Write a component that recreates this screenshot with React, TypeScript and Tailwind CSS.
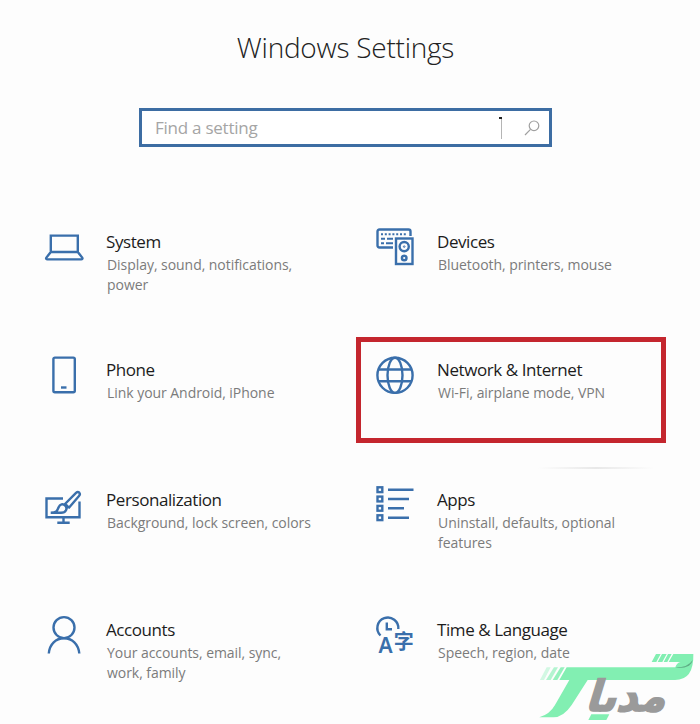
import type { ReactNode } from 'react';

type Setting = {
  title: string;
  description: string;
  icon: ReactNode;
  highlighted?: boolean;
};

const Icon = ({ children }: { children: ReactNode }) => (
  <svg
    viewBox="0 0 40 40"
    className="w-10 h-10 shrink-0 overflow-visible"
    fill="none"
    stroke="#3a6fab"
    strokeWidth="2.4"
  >
    {children}
  </svg>
);

const settings: Setting[] = [
  {
    title: 'System',
    description: 'Display, sound, notifications, power',
    icon: (
      <Icon>
        <path d="M6.8 25V8.6h27V25M6.8 25L2.4 30.6c-.7 1 0 1.8 1 1.8h33.8c1 0 1.7-.8 1-1.8L33.8 25z" />
      </Icon>
    ),
  },
  {
    title: 'Devices',
    description: 'Bluetooth, printers, mouse',
    icon: (
      <Icon>
        <path d="M18 20.500H4.500Q2.500 20.500 2.500 18.500V4.500Q2.500 2.500 4.500 2.500H33.500Q35.500 2.500 35.500 4.500V9" />
        <path d="M6 7.200h26" strokeWidth="2" strokeDasharray="2 1.800" />
        <path d="M6 11.700h4M12 11.700h6M6 16.200h3M11 16.200h7" strokeWidth="2" />
        <rect x="21" y="11.500" width="16.500" height="25.500" />
        <circle cx="29.200" cy="19.600" r="4.600" />
        <circle cx="29.200" cy="19.600" r="0.800" strokeWidth="1" />
        <circle cx="29.200" cy="31" r="2.300" />
      </Icon>
    ),
  },
  {
    title: 'Phone',
    description: 'Link your Android, iPhone',
    icon: (
      <Icon>
        <rect x="9.400" y="2.600" width="21.400" height="34.600" rx="1.500" />
        <path d="M17 32.500h5.500" />
      </Icon>
    ),
  },
  {
    title: 'Network & Internet',
    description: 'Wi-Fi, airplane mode, VPN',
    highlighted: true,
    icon: (
      <Icon>
        <circle cx="20" cy="20.300" r="17.600" />
        <ellipse cx="20" cy="20.300" rx="7.500" ry="17.600" />
        <path d="M3.200 14.500h33.600M3.200 26.200h33.600" />
      </Icon>
    ),
  },
  {
    title: 'Personalization',
    description: 'Background, lock screen, colors',
    icon: (
      <Icon>
        <path d="M19 13.500H2.500V32.300H35.500V16.500" />
        <path d="M19.500 32.500V37.500M13.300 37.700h12.400" />
        <path d="M20.500 19.500L32 7.900Q33.800 6.300 35.300 7.700Q36.600 9.200 35 11L24.500 23.300M20.500 19.500Q23.500 20 24.500 23.300" />
        <path d="M6.700 27.800C12.500 27.800 13.200 26 14.500 22.500C16 19 19 18.500 21 20.500C24 23.500 22 27.800 17 27.800Z" />
      </Icon>
    ),
  },
  {
    title: 'Apps',
    description: 'Uninstall, defaults, optional features',
    icon: (
      <Icon>
        <rect x="2.500" y="2.300" width="4.800" height="4.800" />
        <rect x="2.500" y="11.600" width="4.800" height="4.800" />
        <rect x="2.500" y="20.900" width="4.800" height="4.800" />
        <rect x="2.500" y="30.300" width="4.800" height="4.800" />
        <path d="M13 4.700h25.500M13 14h21M13 23.300h16M13 32.700h21" />
      </Icon>
    ),
  },
  {
    title: 'Accounts',
    description: 'Your accounts, email, sync, work, family',
    icon: (
      <Icon>
        <circle cx="20" cy="12.600" r="10.500" />
        <path d="M4.800 38.500C5.500 29 12 23.200 20 23.200S34.500 29 35.300 38.500" />
      </Icon>
    ),
  },
  {
    title: 'Time & Language',
    description: 'Speech, region, date',
    icon: (
      <Icon>
        <path d="M5.500 20.500A10.500 10.500 0 1 1 23.300 14" />
        <path d="M11.800 7.500V14.300H17" />
        <text
          x="3.500"
          y="38"
          fill="#3a6fab"
          stroke="none"
          className="font-['Noto_Sans',sans-serif] text-[21px] font-semibold"
        >
          A
        </text>
        <text
          x="18.800"
          y="34"
          fill="#3a6fab"
          stroke="none"
          className="font-['Noto_Sans_CJK_SC',sans-serif] text-[20px] font-bold"
        >
          字
        </text>
      </Icon>
    ),
  },
];

function SettingItem({ title, description, icon, highlighted }: Setting) {
  return (
    <div className="relative flex items-start">
      {highlighted && (
        <div className="absolute -left-[19px] -top-[18px] w-[310px] h-[106px] border-[5px] border-[#c4262e]" />
      )}
      {icon}
      <div className="ml-[22px] pt-[3px] w-[210px]">
        <h2 className="text-[17px] leading-6 tracking-[-0.42px] text-[#1c1c1c] whitespace-nowrap">{title}</h2>
        <p className="mt-px ml-px text-[14px] leading-5 tracking-[-0.05px] text-[#7b7b7b]">{description}</p>
      </div>
    </div>
  );
}

function Watermark() {
  return (
    <svg viewBox="0 0 510 252" className="absolute left-[530px] top-[640px] w-[170px] h-[84px]">
      <g fill="#82efb2">
        <path d="M110 82H436Q440 68 452 66H416L430 42H490Q492 120 435 120H173L125 195Q100 232 70 232H28Q60 222 75 195L118 120H88Z" />
        <path d="M92 82h12L82 120H68z" opacity=".85" />
        <path d="M72 82h12L62 120H48z" opacity=".6" />
        <path d="M50 82h12L42 120H30z" opacity=".35" />
        <path d="M378 42h14l-13 24h-14zM396 42h14l-13 24h-14zM414 42h11l-13 24h-11z" />
      </g>
      <path d="M436 83Q475 82 488 60Q486 72 477 77Q460 86 436 83Z" fill="#5fae86" />
      <text
        x="168"
        y="180"
        textLength="240"
        lengthAdjust="spacingAndGlyphs"
        transform="translate(62 0) skewX(-17) scale(1 1.19)"
        fill="#9a9a9a"
        stroke="#9a9a9a"
        strokeWidth="4"
        className="font-['DejaVu_Sans',sans-serif] text-[108px] font-bold"
      >
        مدىا
      </text>
      <path d="M184 223h54l-9 17h-54z" fill="#82efb2" />
    </svg>
  );
}

export default function App() {
  return (
    <div className="relative w-[700px] h-[724px] overflow-hidden bg-[#fdfdfd] font-['Open_Sans','Noto_Sans',sans-serif]">
      <h1 className="pt-[27px] pr-[9px] text-center text-[28px] leading-10 tracking-[-0.25px] font-light text-[#222]">
        Windows Settings
      </h1>

      <div className="mt-[41px] ml-[139px] w-[413px] h-[39px] flex items-center border-[3px] border-[#3d6da3] bg-white pl-[13px]">
        <span className="flex-1 text-[17px] tracking-[-0.25px] text-[#a5a5a5]">Find a setting</span>
        <span className="relative w-px h-[22px] bg-[#b5b5b5]">
          <span className="absolute -left-[2px] top-0 w-[3px] h-[2px] bg-[#222]" />
        </span>
        <svg viewBox="0 0 16 16" className="ml-[22px] mr-[9px] w-4 h-4" fill="none" stroke="#a0a0a0" strokeWidth="1.2">
          <circle cx="10" cy="5.8" r="4.8" />
          <path d="M6.5 9.3L1 15" />
        </svg>
      </div>

      <main className="mt-[80px] ml-[44px] grid grid-cols-[331px_300px] grid-rows-[128px_130px_130px_100px]">
        {settings.map((item) => (
          <SettingItem key={item.title} {...item} />
        ))}
      </main>

      <div className="absolute left-[538px] top-[467px] w-[116px] h-[2px] bg-linear-to-r from-transparent via-[#e8e8e8] to-transparent" />
      <Watermark />
    </div>
  );
}
